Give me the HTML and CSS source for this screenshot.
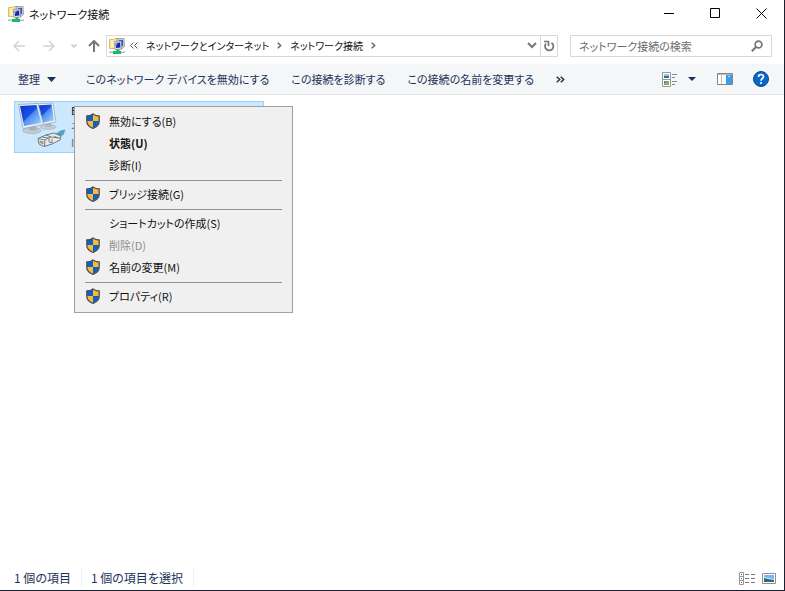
FILE: index.html
```html
<!DOCTYPE html>
<html lang="ja">
<head>
  <meta charset="UTF-8">
  <title>ネットワーク接続</title>
  <link rel="stylesheet" href="styles.css">
</head>
<body>
  <svg class="defs" width="0" height="0">
    <symbol id="net" viewBox="0 0 16 16">
      <path d="M.5 1.500h4l1-1h4v10h-9z" fill="#f8e48c" stroke="#d9bf62"/>
      <path d="M2 2.500h3v7H2z" fill="#fdf4bd"/>
      <path d="M8 .5h7l.5 8-3 2.500H8z" fill="#c3c9cf" stroke="#8a9097" stroke-width=".7"/>
      <path d="M10 2h4v6h-4z" fill="#3b55c8"/>
      <path d="M5 3.500l7-.5.7 8L6 11.500z" fill="#e4e7ea" stroke="#83898f" stroke-width=".7"/>
      <path d="M6.500 5l4.500-.5.5 5-4.500.5z" fill="#1526b0"/>
      <path d="M6.500 5L9 4.800 7.500 8z" fill="#6d8dec"/>
      <path d="M7.500 11.500h3V13h-3z" fill="#3c9c6b"/>
      <path d="M0 13.500h16V15H0z" fill="#aebfb8"/>
      <path d="M4 13h8v3H4z" fill="#17b96c"/>
    </symbol>
    <symbol id="shield" viewBox="0 0 14 16">
      <path d="M7 1v7h6V3C10.500 2.800 8.700 2.200 7 1zM1 8h6v7C3.500 13.500 1 11.500 1 8z" fill="#fdb935"/>
      <path d="M7 1v7H1V3c2.500-.2 4.300-.8 6-2zM13 8H7v7c3.500-1.500 6-3.500 6-7z" fill="#0b62c4"/>
      <path d="M7 .9C5.300 2.200 3.300 2.900.8 3v5.200c0 3.500 2.700 5.700 6.200 7.100 3.500-1.400 6.200-3.600 6.200-7.100V3C10.700 2.900 8.700 2.200 7 .9z" fill="none" stroke="#484e55" stroke-width="1.300"/>
    </symbol>
  </svg>

  <div class="window">
    <header class="titlebar">
      <svg class="app-icon" width="16" height="16"><use href="#net"/></svg>
      <h1 class="title">ネットワーク接続</h1>
      <button class="win-btn" aria-label="最小化"><svg width="11" height="11"><path d="M0 5.500h10" stroke="#000"/></svg></button>
      <button class="win-btn" aria-label="最大化"><svg width="11" height="11"><path d="M.5.500h9v9h-9z" fill="none" stroke="#000"/></svg></button>
      <button class="win-btn" aria-label="閉じる"><svg width="11" height="11"><path d="M.5.500l10 10M10.500.500l-10 10" stroke="#000"/></svg></button>
    </header>

    <div class="navbar">
      <div class="nav-buttons">
        <button class="icon-btn arrow" aria-label="戻る" disabled><svg width="12" height="12" viewBox="0 0 12 12"><path d="M6 1L1 6l5 5M1 6h11" fill="none" stroke="#d3d3d3" stroke-width="1.500"/></svg></button>
        <button class="icon-btn arrow" aria-label="進む" disabled><svg width="12" height="12" viewBox="0 0 12 12"><path d="M6 1l5 5-5 5M11 6H0" fill="none" stroke="#d3d3d3" stroke-width="1.500"/></svg></button>
        <button class="icon-btn" aria-label="最近表示した場所"><svg width="6" height="4" viewBox="0 0 6 4"><path d="M.5.500L3 3 5.500.500" fill="none" stroke="#c9c9c9" stroke-width="1.500"/></svg></button>
        <button class="icon-btn" aria-label="上へ"><svg width="12" height="12" viewBox="0 0 12 12"><path d="M1 6l5-5 5 5M6 1v11" fill="none" stroke="#777" stroke-width="2"/></svg></button>
      </div>
      <nav class="address">
        <svg class="address-icon" width="16" height="16"><use href="#net"/></svg>
        <button class="icon-btn more" aria-label="前の場所"><svg width="8" height="7"><path d="M3.500.500l-3 3 3 3M7.500.500l-3 3 3 3" fill="none" stroke="#555"/></svg></button>
        <a href="#" class="crumb">ネットワークとインターネット</a>
        <svg class="chevron" width="5" height="7"><path d="M.7.700l3 2.800-3 2.800" fill="none" stroke="#666" stroke-width="1.500"/></svg>
        <a href="#" class="crumb">ネットワーク接続</a>
        <svg class="chevron" width="5" height="7"><path d="M.7.700l3 2.800-3 2.800" fill="none" stroke="#666" stroke-width="1.500"/></svg>
        <button class="icon-btn history" aria-label="履歴"><svg width="10" height="7"><path d="M1 1l4 4 4-4" fill="none" stroke="#777" stroke-width="2"/></svg></button>
        <button class="icon-btn refresh" aria-label="更新"><svg width="12" height="12" viewBox="0 0 12 12"><path d="M8.500 2.700A4.200 4.200 0 1 1 3 3.500" fill="none" stroke="#777" stroke-width="1.800"/><path d="M1 1.500h4.500V6" fill="none" stroke="#777" stroke-width="1.700"/></svg></button>
      </nav>
      <form class="search">
        <input type="search" aria-label="検索" placeholder="ネットワーク接続の検索">
        <button type="button" class="icon-btn" aria-label="検索を実行"><svg width="12" height="12" viewBox="0 0 12 12"><circle cx="7.500" cy="4.500" r="3.400" fill="none" stroke="#777" stroke-width="1.700"/><path d="M5 7L.8 11.200" stroke="#777" stroke-width="2"/></svg></button>
      </form>
    </div>

    <div class="toolbar">
      <button class="command organize">整理 <svg width="9" height="5"><path d="M0 0h9L4.500 5z" fill="#1c3358"/></svg></button>
      <button class="command">このネットワーク デバイスを無効にする</button>
      <button class="command">この接続を診断する</button>
      <button class="command">この接続の名前を変更する</button>
      <button class="icon-btn overflow" aria-label="その他のコマンド"><svg width="9" height="7"><path d="M.7.700l3 2.800-3 2.800M4.700.700l3 2.800-3 2.800" fill="none" stroke="#1c3358" stroke-width="1.500"/></svg></button>
      <div class="view-tools">
        <button class="icon-btn" aria-label="表示方法">
          <svg width="16" height="15">
            <path d="M.5.500h8v14h-8zM.5 7.500h8" fill="#fff" stroke="#969696"/>
            <path d="M2 2h5v2H2z" fill="#8fc8f0"/><path d="M2 4h5v2H2z" fill="#356b86"/>
            <path d="M2 9h5v4H2z" fill="#77b255"/><path d="M2 9h2v2H2z" fill="#4388c8"/><path d="M4 10h2v2H4z" fill="#e09045"/>
            <path d="M10 2.500h5M10 5.500h3M10 9.500h5M10 12.500h3" stroke="#888"/>
          </svg>
        </button>
        <button class="icon-btn" aria-label="表示のオプション"><svg width="8" height="4"><path d="M0 0h8L4 4z" fill="#1c3358"/></svg></button>
        <button class="icon-btn preview" aria-label="プレビュー ウィンドウ">
          <svg width="16" height="12">
            <path d="M.5.500h15v11H.5z" fill="#fff" stroke="#858585"/>
            <path d="M1 1.500h14M4.500 2v9" stroke="#bbb"/>
            <path d="M9 2h6v9H9z" fill="#3d9be8"/><path d="M11 3h2v1h-2z" fill="#b8e0ff"/>
          </svg>
        </button>
        <button class="icon-btn help" aria-label="ヘルプ">
          <svg width="16" height="16"><circle cx="8" cy="8" r="7.500" fill="#0867c8" stroke="#064a94"/><path d="M5.500 6c0-3.300 5-3.200 5-.3C10.500 7.500 8 7.600 8 9.700" fill="none" stroke="#fff" stroke-width="1.700"/><circle cx="8" cy="12" r="1.100" fill="#fff"/></svg>
        </button>
      </div>
    </div>

    <main class="content">
      <a href="#" class="connection">
        <svg class="connection-icon" width="48" height="48" viewBox="0 0 48 48">
          <defs>
            <linearGradient id="screen" x1="0" y1="0" x2="1" y2="1">
              <stop offset="0" stop-color="#0a33cc"/>
              <stop offset=".45" stop-color="#1a50e2"/>
              <stop offset=".5" stop-color="#4f8bf4"/>
              <stop offset="1" stop-color="#a4dcff"/>
            </linearGradient>
          </defs>
          <ellipse cx="30" cy="25" rx="8" ry="2.500" fill="#c3cdd4" stroke="#a3aeb6" stroke-width=".5"/>
          <path d="M27 20h6l1 5h-7z" fill="#adb8c0"/>
          <path d="M16 2l19-1 3 19-15 3z" fill="#eef1f3" stroke="#a0abb3" stroke-width=".8"/>
          <path d="M18 3.500l15.500-1 2.500 16-13 2.500z" fill="url(#screen)"/>
          <ellipse cx="14" cy="28.500" rx="9" ry="3" fill="#c3ccd3" stroke="#929da6" stroke-width=".6"/>
          <path d="M11 23h7l1 5.500h-8z" fill="#a7b1ba"/>
          <path d="M.5 2.500L20 1.500l5.500 21L5 26.500z" fill="#f1f4f6" stroke="#98a5ae" stroke-width=".8"/>
          <path d="M2 4l16.500-1 5 18L6 24z" fill="url(#screen)"/>
          <path d="M35 33c5-1 6-5 12-5l-2 5c-4 0-4 3-8 4z" fill="#42a9cc" stroke="#75889a" stroke-width=".6"/>
          <path d="M20 36.500l8-3.500 8-2 7 3-1 4-8 4-8 2.500-5-2.500z" fill="#e9ebec" stroke="#606b74" stroke-width=".9"/>
          <path d="M20 36.500l7 1.500 5-3 10 1M27 38l-.5 6M31 36v4l3 1v-4M36 34l4 2M24 35l6 1M28 33l5 2" fill="none" stroke="#68737d" stroke-width=".9"/>
          <path d="M21.500 38.500l4 1v3l-3.500-1.500z" fill="#9a9788"/>
        </svg>
        <span class="connection-text">
          <span>Ethernet</span>
          <span class="detail">ネットワーク</span>
          <span class="detail">Intel(R)</span>
        </span>
      </a>

      <div class="context-menu" role="menu">
        <button class="menu-item" role="menuitem"><svg width="14" height="16"><use href="#shield"/></svg><span>無効にする(B)</span></button>
        <button class="menu-item default" role="menuitem"><span>状態(U)</span></button>
        <button class="menu-item" role="menuitem"><span>診断(I)</span></button>
        <hr>
        <button class="menu-item" role="menuitem"><svg width="14" height="16"><use href="#shield"/></svg><span>ブリッジ接続(G)</span></button>
        <hr>
        <button class="menu-item" role="menuitem"><span>ショートカットの作成(S)</span></button>
        <button class="menu-item" role="menuitem" disabled><svg width="14" height="16"><use href="#shield"/></svg><span>削除(D)</span></button>
        <button class="menu-item" role="menuitem"><svg width="14" height="16"><use href="#shield"/></svg><span>名前の変更(M)</span></button>
        <hr>
        <button class="menu-item" role="menuitem"><svg width="14" height="16"><use href="#shield"/></svg><span>プロパティ(R)</span></button>
      </div>
    </main>

    <footer class="statusbar">
      <span class="status">1 個の項目</span>
      <span class="status">1 個の項目を選択</span>
      <div class="status-views">
        <button class="icon-btn" aria-label="詳細表示">
          <svg width="16" height="13">
            <path d="M.5.500h4v12h-4zM.5 4.500h4M.5 8.500h4" fill="#fff" stroke="#969696"/>
            <path d="M2 2h1v1H2z" fill="#555"/><path d="M2 6h1v1H2z" fill="#2a86dc"/><path d="M2 10h1v1H2z" fill="#c22"/>
            <path d="M6 2.500h4M12 2.500h4M6 6.500h4M12 6.500h4M6 10.500h4M12 10.500h4" stroke="#777"/>
          </svg>
        </button>
        <button class="icon-btn" aria-label="大きいアイコン">
          <svg width="14" height="11">
            <path d="M.5.500h13v10H.5z" fill="#fff" stroke="#8f8f8f"/>
            <path d="M2 2h10v4H2z" fill="#78b5f2"/><path d="M2 4l4 1 6 1v3H2z" fill="#dcecf4"/><path d="M2 5l4 1 6 1v2H2z" fill="#2f6972"/>
          </svg>
        </button>
      </div>
    </footer>
  </div>
</body>
</html>
```
FILE: styles.css
```css
* {
  box-sizing: border-box;
}

body {
  margin: 0;
  background: #fff;
  color: #111;
  font-family: "Noto Sans CJK JP", sans-serif;
  font-size: 11px;
  line-height: 18px;
  font-feature-settings: "palt";
}

svg {
  display: block;
  flex-shrink: 0;
}

.defs {
  position: absolute;
}

button,
input {
  margin: 0;
  padding: 0;
  border: 0;
  background: none;
  color: inherit;
  font: inherit;
  font-feature-settings: inherit;
}

a {
  color: inherit;
  text-decoration: none;
}

.window {
  display: flex;
  flex-direction: column;
  min-height: 100vh;
  border-right: 1px solid #1a212e;
  border-bottom: 1px solid #1a212e;
}

.icon-btn {
  display: flex;
  align-items: center;
  justify-content: center;
}

/* title bar */
.titlebar {
  display: flex;
  align-items: center;
  height: 27px;
  padding-left: 8px;
}

.title {
  flex: 1;
  margin: 0 0 0 5px;
  font-size: 11px;
  font-weight: normal;
}

.win-btn {
  display: flex;
  align-items: center;
  justify-content: center;
  width: 46px;
  height: 27px;
}

/* address and search */
.navbar {
  display: flex;
  align-items: center;
  height: 37px;
  padding-right: 12px;
}

.nav-buttons {
  display: flex;
  width: 106px;
  padding-left: 4px;
}

.nav-buttons .icon-btn {
  width: 20px;
}

.nav-buttons .arrow {
  width: 30px;
}

.address {
  display: flex;
  flex: 1;
  align-items: center;
  height: 22px;
  padding-left: 2px;
  border: 1px solid #d9d9d9;
}

.more {
  margin: 0 8px 0 5px;
}

.crumb {
  font-size: 10px;
}

.chevron {
  margin: 0 8px;
}

.history {
  width: 16px;
  height: 20px;
  margin-left: auto;
}

.refresh {
  width: 17px;
  height: 20px;
  border-left: 1px solid #d9d9d9;
}

.search {
  display: flex;
  align-items: center;
  width: 202px;
  height: 22px;
  margin-left: 12px;
  padding: 0 8px;
  border: 1px solid #d9d9d9;
}

.search input {
  flex: 1;
  min-width: 0;
  outline: none;
}

.search input::placeholder {
  color: #6d6d6d;
}

/* command bar */
.toolbar {
  display: flex;
  align-items: center;
  height: 31px;
  padding: 0 15px 0 18px;
  border-bottom: 1px solid #e4e6e9;
  background: #f5f6f8;
  color: #1c3358;
}

.command {
  margin-right: 22px;
  white-space: nowrap;
}

.organize {
  display: flex;
  align-items: center;
  gap: 7px;
  margin-right: 30px;
}

.view-tools {
  display: flex;
  align-items: center;
  margin-left: auto;
  gap: 10px;
}

.preview {
  margin-left: 11px;
}

.help {
  margin-left: 10px;
}

/* connection list */
.content {
  position: relative;
  flex: 1;
  padding: 6px 14px;
}

.connection {
  display: flex;
  width: 250px;
  height: 52px;
  padding-left: 3px;
  border: 1px solid #99d1ff;
  background: #cce8ff;
}

.connection-text {
  display: flex;
  flex-direction: column;
  margin-left: 5px;
  line-height: 16px;
}

.detail {
  color: #6d6d6d;
}

.context-menu {
  position: absolute;
  top: 11px;
  left: 74px;
  width: 219px;
  padding: 3px 2px 5px;
  border: 1px solid #a0a0a0;
  background: #f0f0f0;
}

.menu-item {
  display: grid;
  grid-template-columns: 14px 1fr;
  column-gap: 9px;
  align-items: center;
  width: 100%;
  height: 22px;
  padding-left: 9px;
  text-align: left;
}

.menu-item span {
  grid-column: 2;
}

.menu-item:disabled {
  color: #8d8d8d;
}

.default {
  font-weight: bold;
}

.context-menu hr {
  height: 1px;
  margin: 4px 8px 2px;
  border: 0;
  background: #919191;
}

/* status bar */
.statusbar {
  display: flex;
  align-items: center;
  height: 24px;
  padding: 0 8px 0 14px;
  color: #1c3358;
  font-size: 12px;
}

.status {
  margin-right: 9px;
  padding-right: 10px;
  border-right: 1px solid #f0f0f0;
}

.status-views {
  display: flex;
  align-items: center;
  gap: 7px;
  margin-left: auto;
}
```
